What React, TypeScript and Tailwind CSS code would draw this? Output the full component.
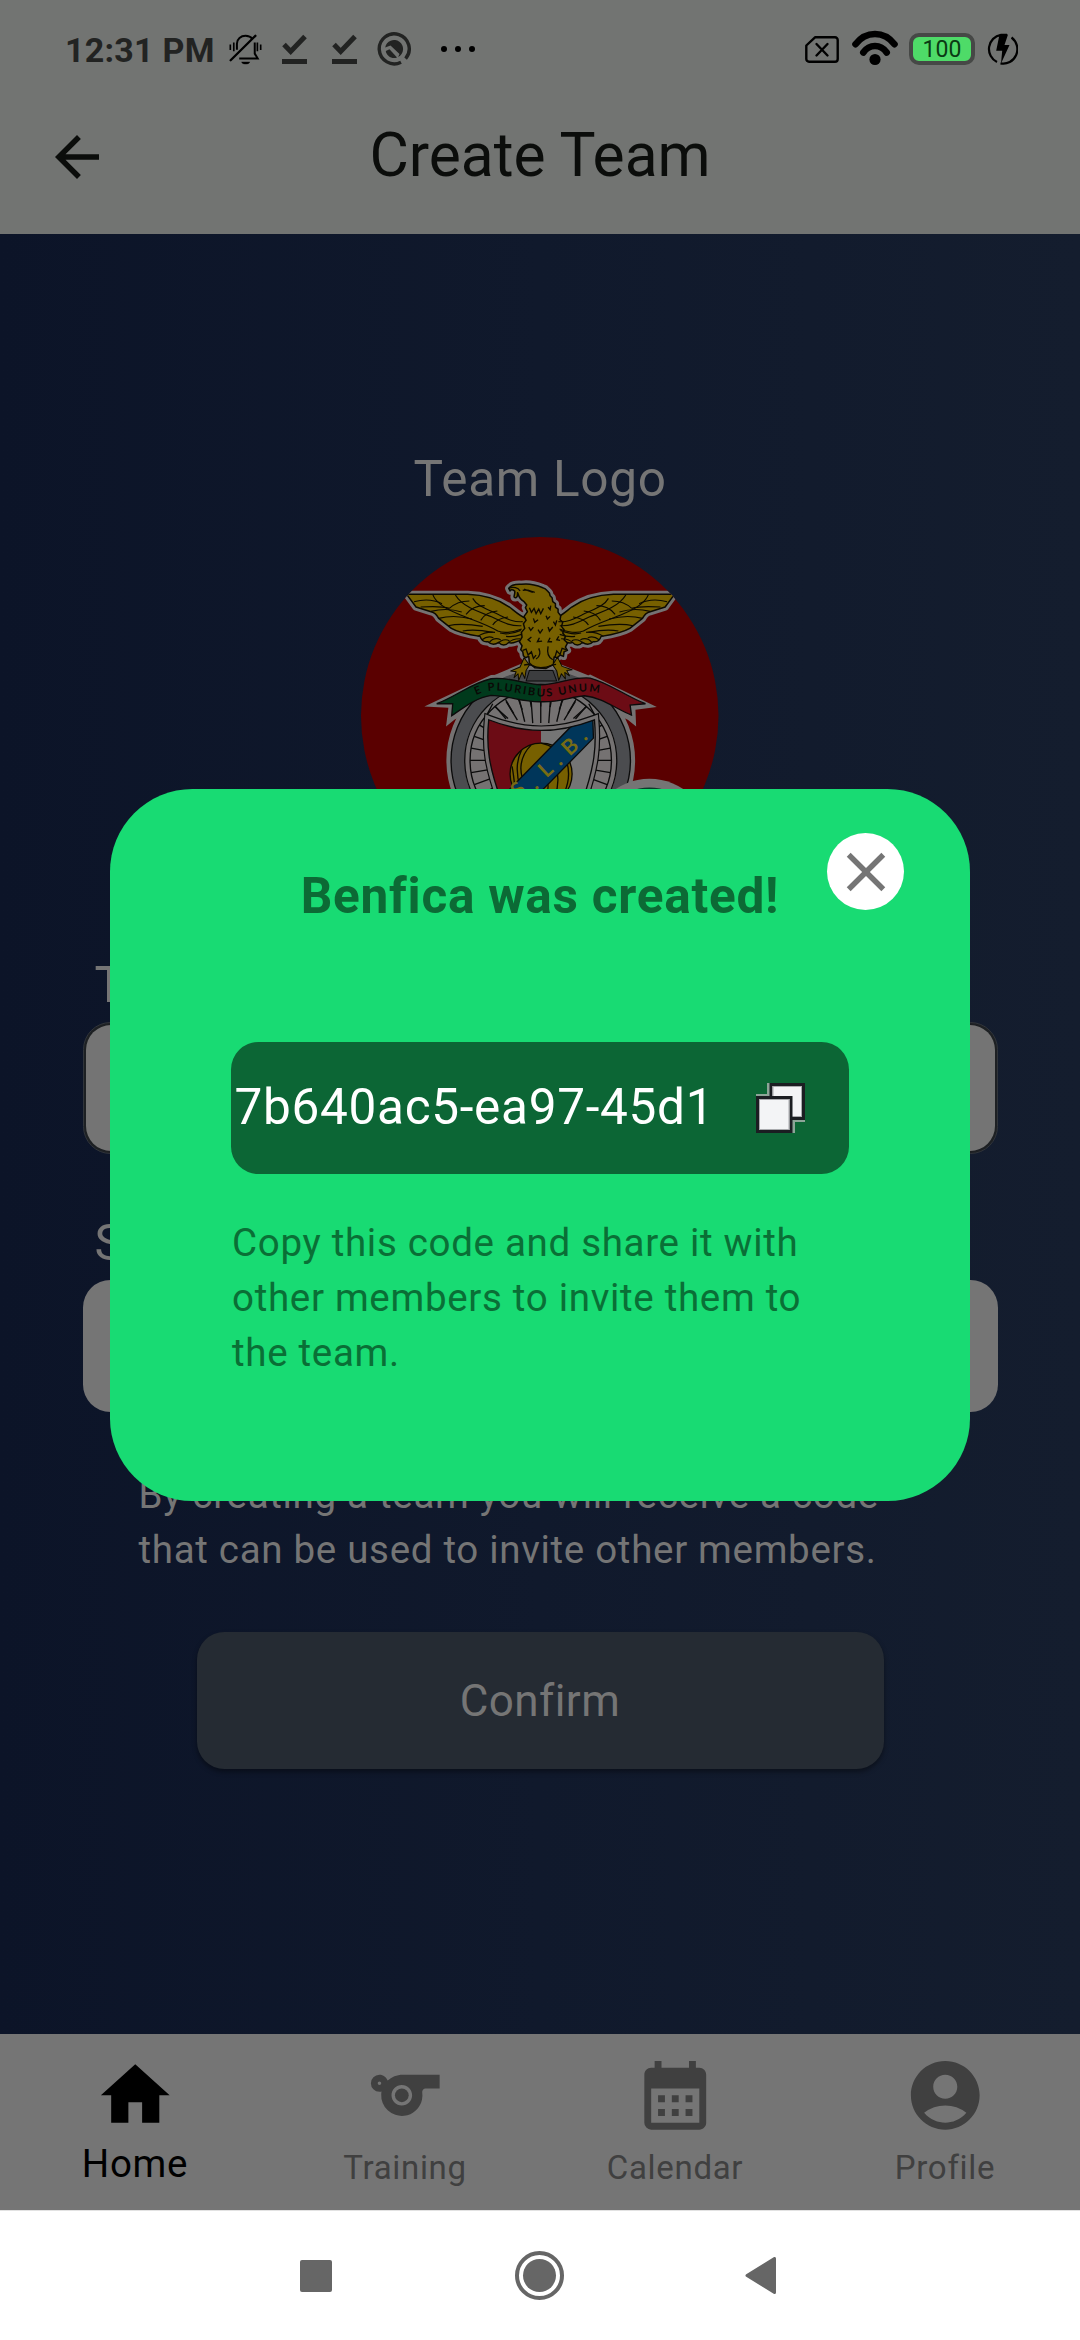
import type { ReactNode } from "react";
import {
  MdAccountCircle,
  MdArrowBack,
  MdCalendarMonth,
  MdClose,
  MdHome,
  MdSports,
} from "react-icons/md";

function BellOffIcon() {
  return (
    <svg className="h-[31px] w-[33px]" viewBox="13 45 100 93" fill="none" stroke="#000" strokeWidth="6">
      <path d="M37 92V74c0-15 12-24 26-24 9 0 17 4 22 10" />
      <path d="M91 70v34l9 15H44" />
      <path d="M27.500 70v27M99 70v27" strokeWidth="5" />
      <path d="M17 76v17M109 76v17" strokeWidth="5" />
      <path d="M51 129h25c-2 9-23 9-25 0z" fill="#000" strokeWidth="1" />
      <path d="M18 124 93 50" strokeWidth="7" strokeLinecap="round" />
    </svg>
  );
}

function CheckLineIcon({ className }: { className?: string }) {
  return (
    <svg className={`h-[31px] w-[25px] ${className ?? ""}`} viewBox="0 0 25 31" fill="none" stroke="#222322">
      <path d="M2 10.500 8.700 17.500 23 2.500" strokeWidth="5" />
      <path d="M0 27.500h25" strokeWidth="5" />
    </svg>
  );
}

function TargetIcon() {
  return (
    <svg className="ml-5 h-[34px] w-[34px]" viewBox="0 0 34 34" fill="none">
      <path d="M28.600 26.600A15 15 0 1 0 24 30.200" stroke="#222322" strokeWidth="3.400" />
      <path d="M8.200 15.500a9 9 0 1 1 13 9.500l1.300-3-9-8.500z" fill="#222322" />
      <path d="m8.800 19 3.700-1.800 7.500 8.300c-5 2-10.500-1.500-11.200-6.500z" fill="#222322" />
    </svg>
  );
}

function SimOffIcon() {
  return (
    <svg className="h-[27px] w-[34px]" viewBox="0 0 34 27" fill="none" stroke="#000">
      <path d="M10 1.300h20a2.700 2.700 0 0 1 2.700 2.700v19a2.700 2.700 0 0 1-2.700 2.700H4A2.700 2.700 0 0 1 1.300 23V9.500z" strokeWidth="2.400" strokeLinejoin="round" />
      <path d="m11.500 8 11 11.500M22.500 8l-11 11.500" strokeWidth="2.400" strokeLinecap="round" />
    </svg>
  );
}

function WifiIcon() {
  return (
    <svg className="-mt-[3px] ml-3 h-[36px] w-[48px]" viewBox="0 0 48 36" fill="none" stroke="#000" strokeLinecap="round">
      <path d="M4.500 14.200c10.500-13.600 28.500-13.600 39 0" strokeWidth="6.600" />
      <path d="M12.300 22.500c6.200-8.600 17.200-8.600 23.400 0" strokeWidth="6.600" />
      <circle cx="24" cy="29.500" r="5.600" fill="#000" stroke="none" />
    </svg>
  );
}

function ChargeIcon() {
  return (
    <svg className="ml-3 h-[32px] w-[31px]" viewBox="0 0 31 32" fill="none">
      <path d="M10 29A14.200 14.400 0 0 1 14 1.800h6M24.500 4.500A14 14.400 0 0 1 13.500 30.300" stroke="#000" strokeWidth="2.200" />
      <path d="M12.500 1.500h8.500l-3.500 10.500h5L14 30.500l1.200-12.800H9.200z" fill="#000" />
    </svg>
  );
}

function StatusBar() {
  return (
    <div className="flex h-[98px] items-center justify-between pl-[65px] pr-[62px]">
      <div className="flex items-center">
        <span className="w-[164px] pt-px text-[34px] font-bold leading-10 tracking-[0.250px] whitespace-nowrap text-[#222322]">
          12:31 PM
        </span>
        <BellOffIcon />
        <CheckLineIcon className="ml-5" />
        <CheckLineIcon className="ml-[25px]" />
        <TargetIcon />
        <div className="ml-[30px] flex gap-2">
          <i className="h-1.5 w-1.5 rounded-full bg-black" />
          <i className="h-1.5 w-1.5 rounded-full bg-black" />
          <i className="h-1.5 w-1.5 rounded-full bg-black" />
        </div>
      </div>
      <div className="flex items-center">
        <SimOffIcon />
        <WifiIcon />
        <div className="ml-[10px] flex h-8 w-[66px] items-center justify-center rounded-[10px] border-4 border-[#464846] bg-[#4edb68] text-[23px] leading-none text-[#0b3a14]">
          100
        </div>
        <ChargeIcon />
      </div>
    </div>
  );
}

function WingFeathers() {
  return (
    <g fill="none" stroke="#0d0a00" strokeWidth="3.500">
      <path d="M250 224c10 28 40 44 75 58 40 18 85 30 120 52 20 8 50 2 72-6" />
      <path d="M318 226c22 36 70 50 110 66 30 14 50 28 88 26" />
      <path d="M370 236c14 26 50 34 80 50 20 10 40 22 70 20" />
      <path d="M194 246c30-8 60-6 84 6M214 262c30-2 60-4 86 4M245 275c24-6 60-8 92 2" />
      <path d="M268 296c30-8 70-6 100 2M296 318c34-8 70-4 104 2M340 334c30-6 60-2 90 4" />
      <path d="M300 266c20-18 40-22 60-22M350 284c14-18 34-26 56-26M394 302c10-18 30-26 50-28M430 316c10-16 26-22 46-24" />
      <path d="M385 350c16-10 34-14 52-12M398 360c10-8 24-10 34-6M420 368c8-10 20-14 34-8M446 371c8-10 22-14 34-8M478 369c6-8 18-12 34-12" />
      <path d="M452 340c14 4 38 2 62-8M470 350c14 2 30 0 46-6" />
    </g>
  );
}

const WING = "M172 224H355C410 226 448 240 480 262 498 276 512 290 530 296V358C500 362 490 376 478 368 470 378 456 378 448 368 436 376 424 374 416 366 404 368 396 362 392 350 366 346 330 340 306 326L268 296C262 284 254 278 245 276L200 262Z";
const BODY = "M478 206C486 194 500 193 516 194 540 190 560 196 580 204 590 206 594 214 600 220L602 228 608 234 610 246 618 252 618 262 626 268 626 278 634 288 632 300 640 308 636 320 644 330 640 340 648 350 644 360 654 370 648 382 654 392 644 396 642 410 632 406 624 414 614 412 612 434 590 446 556 444 540 430 538 410 528 414 522 408 520 396 514 390 518 378 510 366 518 352 516 338 526 326 522 312 530 302 524 290 534 276 528 264 532 256 524 246C514 240 508 230 506 222 502 212 508 230 500 234 488 236 498 224 496 214 488 208 484 210 482 214Z";
const RIBBON = "M262 552C320 530 370 488 425 477 480 470 525 494 575 495 625 494 670 470 722 475 780 490 830 530 888 552L842 556 846 586C800 568 760 534 705 528 660 532 630 548 575 546 520 548 480 528 425 527 380 534 345 562 307 588L310 552Z";
const SHIELD = "M418 600Q500 632 575 632T735 600C742 680 735 740 700 840H455C418 740 410 680 418 600Z";

function TeamCrest() {
  return (
    <svg className="mt-[29px] h-[357.500px] w-[357.500px]" viewBox="35 52 1072 1072">
      <defs>
        <clipPath id="crest-disc">
          <circle cx="571" cy="588" r="536" />
        </clipPath>
        <clipPath id="crest-shield">
          <path d={SHIELD} />
        </clipPath>
        <clipPath id="crest-ribbon">
          <path d={RIBBON} />
        </clipPath>
        <path id="motto-line" d="M380 526C440 498 480 520 575 530 650 532 690 500 770 525" />
      </defs>
      <circle cx="571" cy="588" r="536" fill="#5a0000" />
      <g clipPath="url(#crest-disc)">
        {/* pale silhouette behind the whole crest */}
        <g fill="#757272" stroke="#757272" strokeWidth="22" strokeLinejoin="round">
          <path d={WING} />
          <path d={WING} transform="matrix(-1 0 0 1 1147 0)" />
          <path d={BODY} />
          <path d="M440 476 525 440H620L710 476Z" />
          <circle cx="574" cy="722" r="272" />
        </g>
        <path d="M225 560 425 466Q500 462 575 484T722 464L922 562 858 570 860 620 835 600 705 540H425L315 600 290 620 297 564Z" fill="#757272" />

        {/* wheel */}
        <circle cx="574" cy="722" r="249" fill="none" stroke="#4b4c4f" strokeWidth="40" />
        <g fill="none" stroke="#0b0b0b" strokeWidth="4">
          <circle cx="574" cy="722" r="269" />
          <circle cx="574" cy="722" r="228" />
          <circle cx="574" cy="722" r="212" />
        </g>
        <g stroke="#0b0b0b" strokeWidth="4">
          {Array.from({ length: 36 }, (_, i) => (
            <path key={i} d="M574 510V560" transform={`rotate(${i * 10} 574 722)`} />
          ))}
          <path d="M574 540V610M545 540l5 70M603 540l-5 70M510 540l16 66M638 540l-16 66M470 545l34 56M678 545l-34 56M436 560l40 36M712 560l-40 36" />
        </g>
        <path d="M430 552 410 590M718 552l20 38" stroke="#0b0b0b" strokeWidth="4" />

        {/* eagle */}
        <path d="M452 478C490 462 520 452 540 450H610C640 454 670 466 700 478Z" fill="#47484a" />
        <path d="M530 484 540 452H610L622 484Z" fill="#3c3d3f" stroke="#0b0b0b" strokeWidth="3" />
        <g fill="#776000" stroke="#0d0a00" strokeWidth="4.500" strokeLinejoin="round">
          <path d={WING} />
          <path d={WING} transform="matrix(-1 0 0 1 1147 0)" />
          <path d={BODY} />
          <path d="M524 414 540 436 530 452 526 476 518 458 508 482 506 462 494 474 500 456 484 454 512 442Z" strokeWidth="3" />
          <path d="M624 412 610 436 622 454 628 482 636 462 648 478 646 458 660 468 652 452 668 450 638 440Z" strokeWidth="3" />
        </g>
        <WingFeathers />
        <g transform="matrix(-1 0 0 1 1147 0)">
          <WingFeathers />
        </g>
        <g fill="none" stroke="#0d0a00" strokeWidth="4">
          <path d="M478 206C492 200 506 204 512 214M520 212c12-4 22 2 36 6M524 208l26 10" />
          <path d="m540 264 6 14 8-12 6 16 8-14 6 14 8-16M596 262l6 8 2-12M552 296l4 12 10-8M590 288l4 10 8-8M612 306l6 10 4-14M538 322l6 10 8-10M566 330l6 10 8-12M596 322l4 12 10-12M546 352l-10 8 8 6M570 354l-6 12 14-2M602 354l-6 12 12 0M628 350l-6 10 10 2" />
          <path d="M568 386c6 12 4 24-8 32M596 380c-4 20 2 34 14 40M520 392l10-4 6 18 10-10 6 20 8-10M650 390l-12-4-6 18-10-10-6 20M524 436c20-8 24 8 50 8s36-10 46-10" />
        </g>

        {/* ribbon */}
        <g clipPath="url(#crest-ribbon)">
          <path d="M240 460H575V600H240Z" fill="#003a1c" />
          <path d="M575 460H900V600H575Z" fill="#6c0c15" />
        </g>
        <path d={RIBBON} fill="none" stroke="#0b0b0b" strokeWidth="4" />
        <text fontFamily="Lato" fontWeight="700" fontSize="33" fill="#0a0806" textLength="374" lengthAdjust="spacing">
          <textPath href="#motto-line" textLength="374" lengthAdjust="spacing">
            E PLURIBUS UNUM
          </textPath>
        </text>

        {/* shield */}
        <path d={SHIELD} fill="#757272" stroke="#0b0b0b" strokeWidth="30" />
        <path d={SHIELD} fill="#757272" stroke="#757272" strokeWidth="23" />
        <g clipPath="url(#crest-shield)">
          <path d="M400 580H575V840H400Z" fill="#6c0c15" />
          <path d="M575 580H760V840H575Z" fill="#757575" />
          <circle cx="575" cy="763" r="93" fill="#776000" stroke="#0d0a00" strokeWidth="4" />
          <path d="M545 676c-34 34-40 80-16 120M516 692c-18 36-16 70-4 110M575 670c30 6 50 20 60 40M620 740c8 30 8 60-4 90M650 720c14 40 8 70-6 100M590 770c8 20 8 40 0 60M488 740c4 20 6 40 8 60" fill="none" stroke="#0d0a00" strokeWidth="4" />
          <path d="M460 830 668 617 730 594 732 655 560 830Z" fill="#00365a" stroke="#0b0b0b" strokeWidth="4" />
          <g fontFamily="Lato" fontWeight="700" fontSize="64" fill="#776c14">
            <text transform="translate(508 838) rotate(-43)">S</text>
            <text transform="translate(560 812) rotate(-43)">.</text>
            <text transform="translate(591 776) rotate(-43)">L</text>
            <text transform="translate(632 740) rotate(-43)">.</text>
            <text transform="translate(661 711) rotate(-43)">B</text>
            <text transform="translate(707 665) rotate(-43)">.</text>
          </g>
        </g>
        <path d={SHIELD} fill="none" stroke="#0b0b0b" strokeWidth="4" />
      </g>
      <circle cx="900" cy="960" r="183" fill="#757575" />
      <circle cx="900" cy="960" r="157" fill="#0a3b29" />
    </svg>
  );
}

function CopyIcon() {
  return (
    <svg className="h-[50px] w-[49px]" viewBox="0 0 49 50">
      <path d="M11 0h4v12h-4zM0 11h14v3H0zM35 36h14v3H35zM35 37h4v13h-4z" fill="#8da598" />
      <rect x="15" y="1.500" width="32.500" height="34" fill="#f3f4f6" stroke="#1b1e22" strokeWidth="3" />
      <rect x="17" y="3.500" width="28.500" height="30" fill="none" stroke="#a9abae" strokeWidth="1" />
      <rect x="1.500" y="14.500" width="33.500" height="34" fill="#f3f4f6" stroke="#1b1e22" strokeWidth="3" />
      <rect x="3.500" y="16.500" width="29.500" height="30" fill="none" stroke="#a9abae" strokeWidth="1" />
    </svg>
  );
}

function Header() {
  return (
    <header className="h-[234px] bg-[#727472]">
      <StatusBar />
      <div className="grid h-[118px] grid-cols-[1fr_auto_1fr] items-center">
        <MdArrowBack className="ml-[44px] text-[66px] text-[#0b0d0b]" />
        <h1 className="pb-[3px] text-[60.500px] leading-[70px] text-[#0b0d0b]">Create Team</h1>
      </div>
    </header>
  );
}

function CreateTeamForm() {
  return (
    <main className="flex h-[1800px] flex-col items-center bg-linear-to-r from-[#0c1428] via-[#10192c] to-[#141d2e] pt-[216px] text-[#757575]">
      <h2 className="text-[49.500px] leading-[58px] tracking-[0.690px]">Team Logo</h2>
      <TeamCrest />
      <div className="mt-[61.500px] w-[915px]">
        <label className="block pl-3 text-[49.500px] leading-[58px] tracking-[0.690px]">Team Name</label>
        <div className="mt-[8px] rounded-[27.500px] border border-[#30343a] bg-[#1d2023] p-[2px]">
          <div className="h-[126px] rounded-[25px] bg-[#747474]" />
        </div>
        <label className="mt-[60px] block pl-3 text-[49.500px] leading-[58px] tracking-[0.690px]">Sport</label>
        <div className="mt-[7.500px] h-[132px] rounded-[27.500px] bg-[#757575]" />
      </div>
      <p className="mt-[55.500px] w-[803px] text-[38.500px] leading-[55px] tracking-[0.690px]">
        By creating a team you will receive a code
        <br />
        that can be used to invite other members.
      </p>
      <button className="mt-[54.500px] h-[137.500px] w-[687px] rounded-[27.500px] bg-[#252b33] pt-[2px] text-[44px] leading-[52px] tracking-[0.400px] shadow-[0_3px_5px_rgba(0,0,0,0.4)]">
        Confirm
      </button>
    </main>
  );
}

function NavItem({ icon, label, active }: { icon: ReactNode; label: string; active?: boolean }) {
  return (
    <div className={`flex flex-1 flex-col items-center pt-[19.500px] ${active ? "text-black" : "text-[#404040]"}`}>
      <span className="text-[82.500px] leading-none">{icon}</span>
      <span
        className={
          active
            ? "mt-[5px] text-[38.500px] leading-[46px] tracking-[0.690px]"
            : "mt-[9px] text-[33px] leading-[46px] tracking-[0.690px]"
        }
      >
        {label}
      </span>
    </div>
  );
}

function BottomNav() {
  return (
    <nav className="flex h-[176px] bg-[#757575]">
      <NavItem icon={<MdHome />} label="Home" active />
      <NavItem icon={<MdSports />} label="Training" />
      <NavItem icon={<MdCalendarMonth />} label="Calendar" />
      <NavItem icon={<MdAccountCircle />} label="Profile" />
    </nav>
  );
}

function SystemNav() {
  return (
    <div className="flex h-[130px] items-center border-t border-[#e2e2e2] bg-white pl-[300px]">
      <div className="h-8 w-8 rounded-[2px] bg-[#666]" />
      <div className="ml-[183px] flex h-[49px] w-[49px] items-center justify-center rounded-full border-4 border-[#666]">
        <div className="h-[33px] w-[33px] rounded-full bg-[#666]" />
      </div>
      <svg className="ml-[181px] h-[37px] w-[31px]" viewBox="0 0 31 37">
        <path d="M2 18.500 29.500 1.500v34z" fill="#666" stroke="#666" strokeWidth="3" strokeLinejoin="round" />
      </svg>
    </div>
  );
}

function CreatedDialog() {
  return (
    <div className="absolute inset-x-0 top-[80px] flex h-[2130px] items-center justify-center">
      <section className="relative flex h-[712px] w-[860px] flex-col items-center rounded-[82.500px] bg-[#18db73] pt-[78px]">
        <h2 className="text-[49.500px] font-bold leading-[58px] tracking-[0.750px] text-[#0c6a35]">Benfica was created!</h2>
        <button className="absolute right-[66px] top-[44px] flex h-[77px] w-[77px] items-center justify-center rounded-full bg-white">
          <MdClose className="text-[66px] text-[#757575]" />
        </button>
        <div className="mt-[117px] flex h-[132px] w-[618px] items-center justify-between rounded-[27.500px] bg-[#0c6635] pl-[3.500px] pr-[44px]">
          <span className="pb-[2px] text-[49.500px] leading-[58px] tracking-[0.690px] text-white">7b640ac5-ea97-45d1</span>
          <CopyIcon />
        </div>
        <p className="mt-[40.500px] w-[618px] pl-px text-[38.500px] leading-[55px] tracking-[0.690px] text-[#0a6f36]">
          Copy this code and share it with
          <br />
          other members to invite them to
          <br />
          the team.
        </p>
      </section>
    </div>
  );
}

export default function App() {
  return (
    <div className="relative h-[2340px] w-[1080px] overflow-hidden font-[Roboto,sans-serif]">
      <Header />
      <CreateTeamForm />
      <BottomNav />
      <SystemNav />
      <CreatedDialog />
    </div>
  );
}
